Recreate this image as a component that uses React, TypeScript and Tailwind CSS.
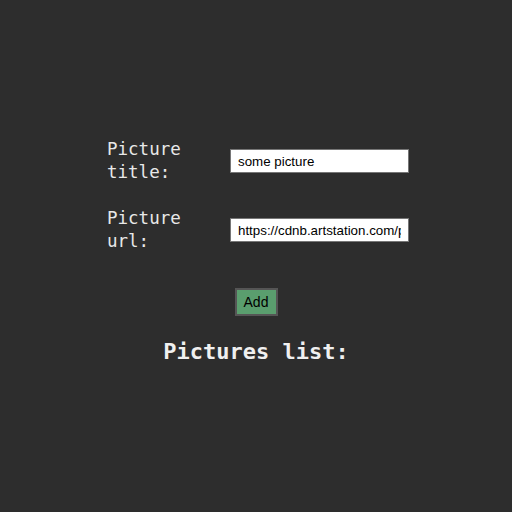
import React from "react";

export default function App() {
  return (
    <div className="w-full min-h-[512px] bg-[#2d2d2d] pt-[138px] flex flex-col items-center">
      <div className="w-[302px] ml-[4px] flex flex-col gap-[23px]">
        <div className="flex items-center">
          <label className="w-[123px] text-[17.5px] leading-[23px] text-[#e8e8e8] font-['DejaVu_Sans_Mono',monospace]">
            Picture title:
          </label>
          <input
            className="w-[179px] h-[24px] bg-white border border-[#767676] px-[7px] text-[13.33px] text-black font-['Liberation_Sans',Arial,sans-serif] outline-none"
            defaultValue="some picture"
          />
        </div>
        <div className="flex items-center">
          <label className="w-[123px] text-[17.5px] leading-[23px] text-[#e8e8e8] font-['DejaVu_Sans_Mono',monospace]">
            Picture url:
          </label>
          <input
            className="w-[179px] h-[24px] bg-white border border-[#767676] px-[7px] text-[13.33px] text-black font-['Liberation_Sans',Arial,sans-serif] outline-none"
            defaultValue="https://cdnb.artstation.com/p/assets/images/picture.jpg"
          />
        </div>
      </div>
      <button className="mt-[35px] w-[43px] h-[28px] bg-[#5a9e6e] border-2 border-[#555555] text-[14px] text-black font-['Liberation_Sans',Arial,sans-serif] leading-none">
        Add
      </button>
      <h2 className="mt-[21px] text-[22px] leading-[30px] font-bold text-[#f0f0f0] font-['DejaVu_Sans_Mono',monospace]">
        Pictures list:
      </h2>
    </div>
  );
}
